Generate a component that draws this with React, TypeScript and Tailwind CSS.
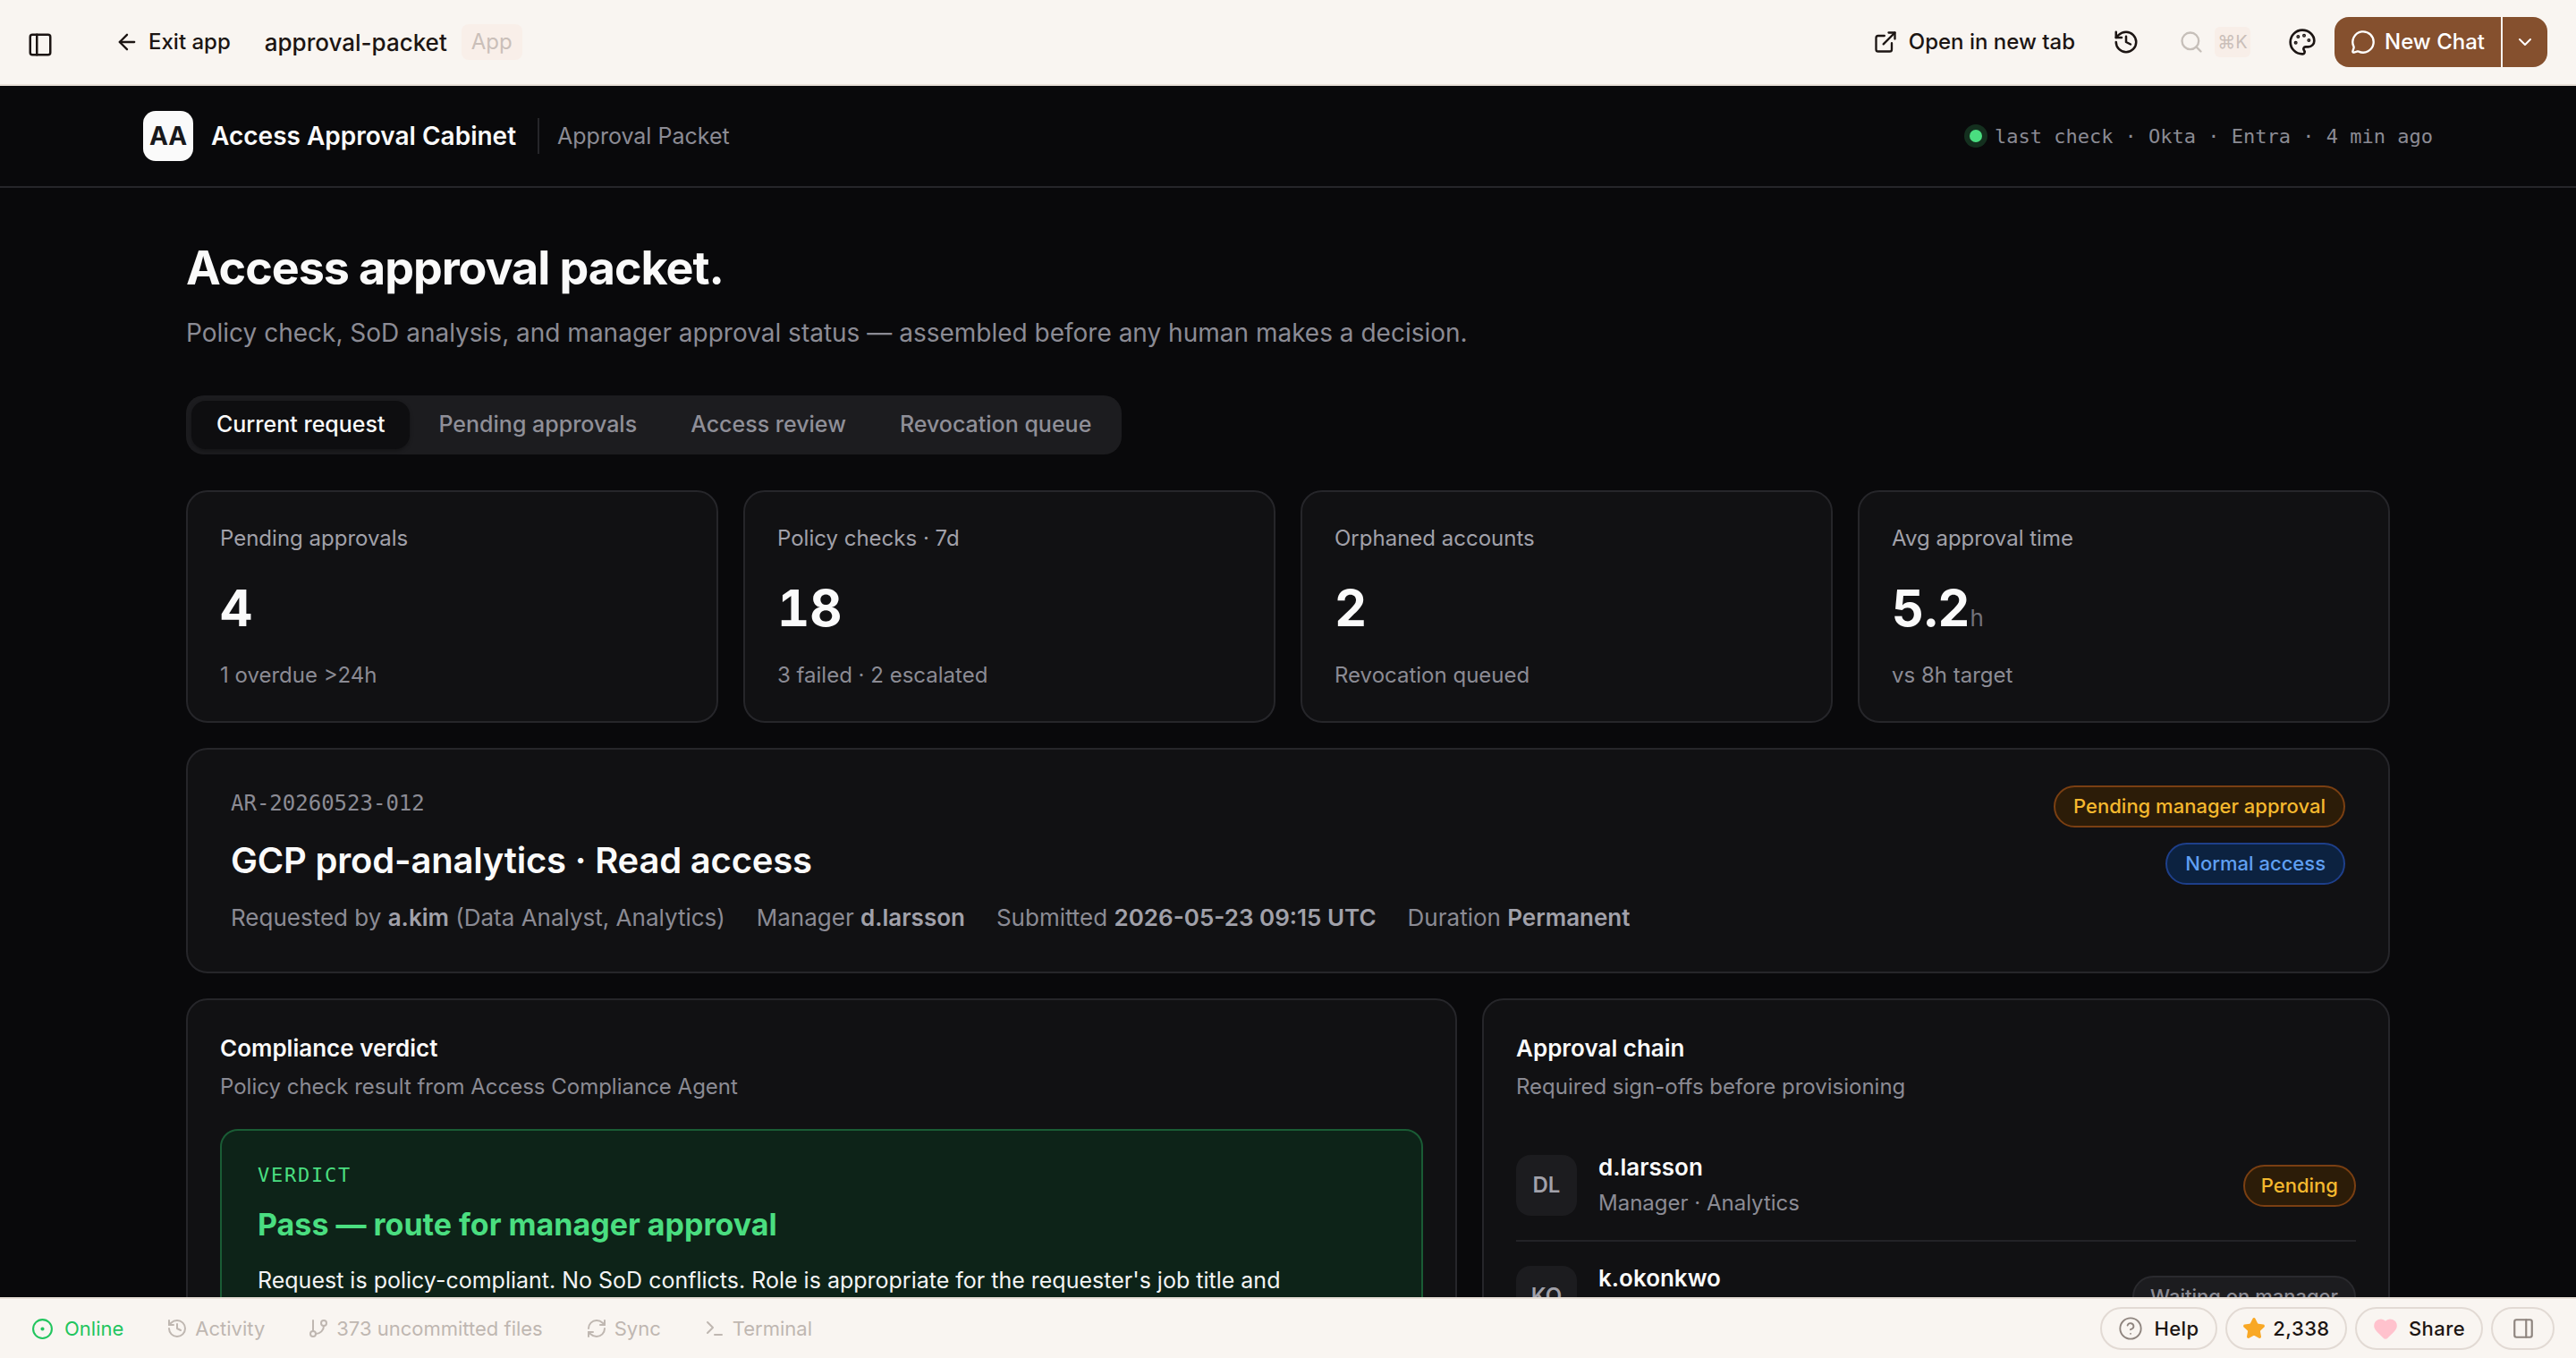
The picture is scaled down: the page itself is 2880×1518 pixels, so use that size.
import React from "react";
import {
  PanelLeft, ArrowLeft, ExternalLink, History, Search, Palette, MessageCircle, ChevronDown,
  CircleDot, GitBranch, RefreshCw, Terminal, CircleHelp, Star, Heart, PanelRight,
} from "lucide-react";

const MONO = "font-['DejaVu_Sans_Mono',monospace]";

function Stat({ label, value, unit, sub }: { label: string; value: string; unit?: string; sub: string }) {
  return (
    <div className="h-[260px] rounded-[24px] border-2 border-[#26262a] bg-[#111113] px-[36px] pt-[34px]">
      <div className="text-[24px] leading-[36px] text-[#a1a1aa]">{label}</div>
      <div className="mt-[28px] h-[64px] text-[56px] leading-[64px] font-bold tabular-nums text-[#fafafa]">
        {value}
        {unit && <span className="text-[26px] leading-none font-normal text-[#71717a]">{unit}</span>}
      </div>
      <div className="mt-[25px] text-[24px] leading-[36px] text-[#8b8b94]">{sub}</div>
    </div>
  );
}

function Badge({ tone, compact, children }: { tone: "amber" | "blue" | "gray"; compact?: boolean; children: React.ReactNode }) {
  const c =
    tone === "amber"
      ? "border-[#7a3f12] bg-[#2c1c08] text-[#f5b82e]"
      : tone === "blue"
      ? "border-[#1e3f8a] bg-[#0c2240] text-[#5f9ff2]"
      : "border-[#2a2a2e] bg-[#1c1c1f] text-[#8b8b94]";
  return (
    <span className={`inline-flex h-[47px] items-center rounded-full border-2 ${compact ? "px-[18px]" : "px-[20px]"} text-[22px] font-medium whitespace-nowrap ${c}`}>
      {children}
    </span>
  );
}

function Approver({ initials, name, role, badge, tone, divider }: { initials: string; name: string; role?: string; badge: string; tone: "amber" | "gray"; divider?: boolean }) {
  return (
    <div className={`flex items-center gap-[24px] py-[24px] ${divider ? "border-b-2 border-[#232327]" : ""}`}>
      <div className="flex h-[68px] w-[68px] shrink-0 items-center justify-center rounded-[16px] bg-[#1c1c1f] text-[24px] font-semibold text-[#a1a1aa]">
        {initials}
      </div>
      <div className="min-w-0 flex-1">
        <div className="text-[26px] leading-[34px] font-semibold text-[#fafafa]">{name}</div>
        <div className="mt-[6px] h-[34px] text-[24px] leading-[34px] text-[#8b8b94]">{role}</div>
      </div>
      <Badge tone={tone} compact>{badge}</Badge>
    </div>
  );
}

function Meta({ label, value, suffix }: { label: string; value: string; suffix?: string }) {
  return (
    <span>
      {label} <b className="font-semibold text-[#a1a1aa]">{value}</b>
      {suffix ? ` ${suffix}` : ""}
    </span>
  );
}

function BarItem({ icon, label, active }: { icon: React.ReactNode; label: string; active?: boolean }) {
  return (
    <div className={`flex items-center text-[22px] ${active ? "gap-[12px] text-[#22c55e]" : "gap-[8px] text-[#bfb7b1]"}`}>
      {icon}
      <span>{label}</span>
    </div>
  );
}

function Pill({ children, className = "" }: { children: React.ReactNode; className?: string }) {
  return (
    <div className={`flex h-[48px] items-center rounded-full border-2 border-[#e2dad4] bg-[#f9f5f1] text-[22px] font-medium tracking-[0.02em] text-[#1c1513] ${className}`}>
      {children}
    </div>
  );
}

export default function App() {
  return (
    <div className="flex h-screen flex-col overflow-hidden bg-[#09090b] font-['Inter',sans-serif]">
      <header className="flex h-[96px] shrink-0 items-center border-b-2 border-[#e8e0d8] bg-[#f9f5f1] pl-[30px] pr-[32px] text-[#1c1513]">
        <PanelLeft className="mt-[6px] h-[30px] w-[30px]" strokeWidth={2} />
        <div className="ml-[68px] flex items-center gap-[10px] text-[24px] font-medium">
          <ArrowLeft className="h-[28px] w-[28px]" strokeWidth={2} />
          <span>Exit app</span>
        </div>
        <span className="ml-[38px] text-[26px] font-medium">approval-packet</span>
        <span className="ml-[16px] flex h-[40px] w-[68px] items-center justify-center rounded-[8px] bg-[#f9efe9] text-[24px] text-[#cabfb9]">App</span>
        <div className="flex-1" />
        <div className="flex items-center gap-[12px] text-[24px] font-medium">
          <ExternalLink className="h-[28px] w-[28px]" strokeWidth={2} />
          <span>Open in new tab</span>
        </div>
        <History className="ml-[42px] h-[30px] w-[30px]" strokeWidth={2} />
        <Search className="ml-[44px] h-[28px] w-[28px] text-[#c6bfb9]" strokeWidth={2} />
        <span className="ml-[12px] flex h-[34px] w-[40px] items-center justify-center rounded-[6px] bg-[#f8eee8] text-[20px] text-[#cabfb9]">⌘K</span>
        <Palette className="ml-[42px] h-[32px] w-[32px]" strokeWidth={2} />
        <div className="ml-[20px] flex h-[56px] items-stretch text-white">
          <div className="flex w-[186px] items-center justify-center gap-[10px] rounded-l-[16px] bg-[#85502e] text-[24px] font-medium">
            <MessageCircle className="h-[28px] w-[28px]" strokeWidth={2} />
            <span>New Chat</span>
          </div>
          <div className="ml-[2px] flex w-[50px] items-center justify-center rounded-r-[16px] bg-[#85502e]">
            <ChevronDown className="h-[24px] w-[24px]" strokeWidth={2} />
          </div>
        </div>
      </header>

      <main className="min-h-0 flex-1 overflow-hidden bg-[#09090b]">
        <div className="border-b-2 border-[#26262a]">
          <div className="mx-auto flex h-[112px] w-[2560px] items-center">
            <div className="flex h-[56px] w-[56px] items-center justify-center rounded-[14px] bg-[#fafafa] text-[28px] font-bold text-[#18181b]">AA</div>
            <span className="ml-[20px] text-[28px] font-semibold text-[#fafafa]">Access Approval Cabinet</span>
            <span className="ml-[24px] h-[40px] w-[2px] bg-[#26262a]" />
            <span className="ml-[20px] pt-[2px] text-[25px] text-[#8b8b94]">Approval Packet</span>
            <div className="flex-1" />
            <span className="h-[14px] w-[14px] rounded-full bg-[#4ade80] shadow-[0_0_0_6px_#14301f]" />
            <span className={`ml-[14px] text-[22px] text-[#8b8b94] ${MONO}`}>last check · Okta · Entra · 4 min ago</span>
          </div>
        </div>

        <div className="mx-auto w-[2560px] px-[48px] pt-[56px]">
          <h1 className="text-[52px] leading-[68px] font-bold tracking-[-0.02em] text-[#fafafa]">Access approval packet.</h1>
          <p className="mt-[16px] text-[28px] leading-[44px] text-[#8b8b94]">
            Policy check, SoD analysis, and manager approval status — assembled before any human makes a decision.
          </p>

          <div className="mt-[48px] inline-flex h-[66px] w-[1046px] items-center gap-[8px] rounded-[20px] bg-[#1c1c1f] p-[6px] align-top text-[25px] font-medium text-[#8f8f98]">
            <span className="flex h-[54px] items-center rounded-[16px] bg-[#0e0e10] px-[28px] text-[#fafafa] shadow-[0_2px_4px_rgba(0,0,0,0.3)]">Current request</span>
            <span className="ml-[-2px] px-[26px]">Pending approvals</span>
            <span className="px-[26px]">Access review</span>
            <span className="px-[26px]">Revocation queue</span>
          </div>

          <div className="mt-[40px] grid grid-cols-4 gap-[28px]">
            <Stat label="Pending approvals" value="4" sub="1 overdue >24h" />
            <Stat label="Policy checks · 7d" value="18" sub="3 failed · 2 escalated" />
            <Stat label="Orphaned accounts" value="2" sub="Revocation queued" />
            <Stat label="Avg approval time" value="5.2" unit="h" sub="vs 8h target" />
          </div>

          <div className="mt-[28px] flex h-[252px] justify-between rounded-[24px] border-2 border-[#26262a] bg-[#111113] px-[48px] pt-[42px]">
            <div>
              <div className={`text-[24px] leading-[36px] text-[#8b8b94] ${MONO}`}>AR-20260523-012</div>
              <div className="mt-[18px] text-[40px] leading-[56px] font-semibold tracking-[-0.005em] text-[#fafafa]">GCP prod-analytics · Read access</div>
              <div className="mt-[16px] flex gap-[35px] text-[26px] leading-[40px] text-[#8b8b94]">
                <Meta label="Requested by" value="a.kim" suffix="(Data Analyst, Analytics)" />
                <Meta label="Manager" value="d.larsson" />
                <Meta label="Submitted" value="2026-05-23 09:15 UTC" />
                <Meta label="Duration" value="Permanent" />
              </div>
            </div>
            <div className="-mt-[2px] flex flex-col items-end gap-[17px]">
              <Badge tone="amber">Pending manager approval</Badge>
              <Badge tone="blue">Normal access</Badge>
            </div>
          </div>

          <div className="mt-[28px] grid grid-cols-[1.4fr_1fr] gap-[28px]">
            <section className="rounded-[24px] border-2 border-[#26262a] bg-[#111113] px-[36px] pt-[35px] pb-[36px]">
              <h2 className="text-[26px] leading-[38px] font-semibold text-[#fafafa]">Compliance verdict</h2>
              <p className="mt-[6px] text-[24px] leading-[36px] text-[#8b8b94]">Policy check result from Access Compliance Agent</p>
              <div className="mt-[29px] rounded-[20px] border-2 border-[#1a5c35] bg-[#0d2318] px-[40px] pt-[36px] pb-[36px]">
                <div className={`text-[22px] leading-[28px] tracking-[0.08em] text-[#4ade80] ${MONO}`}>VERDICT</div>
                <div className="mt-[16px] text-[34px] leading-[50px] font-bold text-[#4ade80]">Pass — route for manager approval</div>
                <p className="mt-[15px] text-[25px] leading-[44px] text-[#f4f4f5]">
                  Request is policy-compliant. No SoD conflicts. Role is appropriate for the requester's job title and
                </p>
              </div>
            </section>
            <section className="rounded-[24px] border-2 border-[#26262a] bg-[#111113] px-[36px] pt-[35px] pb-[36px]">
              <h2 className="text-[26px] leading-[38px] font-semibold text-[#fafafa]">Approval chain</h2>
              <p className="mt-[6px] text-[24px] leading-[36px] text-[#8b8b94]">Required sign-offs before provisioning</p>
              <div className="mt-[31px]">
                <Approver initials="DL" name="d.larsson" role="Manager · Analytics" badge="Pending" tone="amber" divider />
                <Approver initials="KO" name="k.okonkwo" badge="Waiting on manager" tone="gray" />
              </div>
            </section>
          </div>
        </div>
      </main>

      <footer className="flex h-[68px] shrink-0 items-center border-t-2 border-[#e8e0d8] bg-[#f9f5f1] pl-[35px] pr-[24px]">
        <div className="flex items-center gap-[48px]">
          <BarItem active label="Online" icon={<CircleDot className="h-[25px] w-[25px]" strokeWidth={2} />} />
          <BarItem label="Activity" icon={<History className="h-[24px] w-[24px]" strokeWidth={2} />} />
          <BarItem label="373 uncommitted files" icon={<GitBranch className="h-[24px] w-[24px]" strokeWidth={2} />} />
          <BarItem label="Sync" icon={<RefreshCw className="h-[24px] w-[24px]" strokeWidth={2} />} />
          <BarItem label="Terminal" icon={<Terminal className="h-[24px] w-[24px]" strokeWidth={2} />} />
        </div>
        <div className="flex-1" />
        <div className="flex items-center gap-[9px]">
          <Pill className="w-[131px] justify-center gap-[12px]">
            <CircleHelp className="h-[28px] w-[28px] text-[#8f857f]" strokeWidth={1.6} />
            <span>Help</span>
          </Pill>
          <Pill className="w-[136px] justify-center gap-[8px]">
            <Star className="h-[26px] w-[26px] fill-[#f9a825] text-[#f9a825]" />
            <span>2,338</span>
          </Pill>
          <Pill className="w-[143px] justify-center gap-[12px]">
            <Heart className="h-[28px] w-[28px] fill-[#ffc2cd] text-[#ffc2cd]" />
            <span>Share</span>
          </Pill>
          <Pill className="w-[71px] justify-center">
            <PanelRight className="h-[26px] w-[26px] text-[#8f857f]" strokeWidth={2} />
          </Pill>
        </div>
      </footer>
    </div>
  );
}
